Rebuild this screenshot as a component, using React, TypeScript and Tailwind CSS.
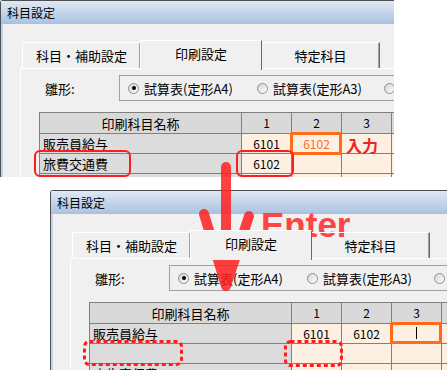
import React from "react";

type Row = { name: string; cells: string[]; orange?: number };

const topRows: Row[] = [
  { name: "販売員給与", cells: ["6101", "6102", "", "", ""], orange: 1 },
  { name: "旅費交通費", cells: ["6102", "", "", "", ""] },
  { name: "広告宣伝費", cells: ["6103", "", "", "", ""] },
];

const bottomRows: Row[] = [
  { name: "販売員給与", cells: ["6101", "6102", "", "", ""] },
  { name: "", cells: ["", "", "", "", ""] },
  { name: "広告宣伝費", cells: ["6103", "", "", "", ""] },
];

function Radio({ on }: { on?: boolean }) {
  return (
    <span className="w-[11px] h-[11px] shrink-0 rounded-full border border-[#8e8f8f] bg-gradient-to-br from-[#d4d4d4] to-white flex items-center justify-center">
      {on && <span className="w-[4px] h-[4px] rounded-full bg-black" />}
    </span>
  );
}

function SettingsWindow({ rows }: { rows: Row[] }) {
  return (
    <div className="w-[460px] h-[200px] flex flex-col border-t border-l border-[#4e4e4e] rounded-tl-[3px] bg-[#f0f0f0]">
      <div className="h-[23px] shrink-0 flex items-center pl-[6px] text-[12px] leading-none bg-gradient-to-b from-[#e0e9f5] to-[#a9c1df]">
        科目設定
      </div>

      <div className="flex-1 flex flex-col border-l-2 border-[#c3d5ec] pt-[16px] pl-[17px]">
        {/* tabs */}
        <div className="relative z-10 flex items-start h-[30px] pl-[2px] text-[13px] leading-none">
          <div className="shrink-0 mt-[2px] w-[118px] h-[26px] flex items-center justify-center border-t border-l border-white shadow-[inset_-1px_0_0_#a0a0a0]">
            科目・補助設定
          </div>
          <div className="shrink-0 w-[122px] h-[30px] pb-[4px] flex items-center justify-center bg-[#f0f0f0] border-t border-l border-white border-r border-r-[#6a6a6a]">
            印刷設定
          </div>
          <div className="shrink-0 mt-[2px] w-[118px] h-[26px] flex items-center justify-center border-t border-white border-r border-r-[#6a6a6a] shadow-[inset_-1px_0_0_#a0a0a0]">
            特定科目
          </div>
        </div>

        {/* panel */}
        <div className="-mt-[2px] flex-1 flex flex-col border-t border-l border-white pt-[6px]">
          <div className="flex items-center h-[26px] text-[13px] leading-none">
            <div className="shrink-0 w-[98px] pl-[24px]">雛形:</div>
            <div className="flex-1 h-[26px] flex items-center pl-[8px] border border-[#a0a0a0]">
              <div className="shrink-0 w-[129px] flex items-center gap-[5px]">
                <Radio on />
                <span>試算表(定形A4)</span>
              </div>
              <div className="shrink-0 w-[127px] flex items-center gap-[5px]">
                <Radio />
                <span>試算表(定形A3)</span>
              </div>
              <div className="shrink-0 flex items-center">
                <Radio />
              </div>
            </div>
          </div>

          <div className="mt-[11px] ml-[18px] w-max grid grid-cols-[201px_49px_49px_49px_49px_49px] grid-rows-[20px_19px_19px_19px] gap-px bg-[#808080] border border-[#808080] leading-none">
            <div className="bg-[#d9d9d9] flex items-center justify-center text-[13px]">印刷科目名称</div>
            {["1", "2", "3", "4", "5"].map((n) => (
              <div key={n} className="bg-[#d9d9d9] flex items-center justify-center text-[12px]">
                {n}
              </div>
            ))}
            {rows.map((r, i) => (
              <React.Fragment key={i}>
                <div className="bg-[#dcdcdc] flex items-center pl-[3px] text-[13px]">{r.name}</div>
                {r.cells.map((c, j) => (
                  <div
                    key={j}
                    className={`bg-[#fdf0e2] flex items-center justify-center text-[12px] ${r.orange === j ? "text-[#ff6a1f]" : ""}`}
                  >
                    {c}
                  </div>
                ))}
              </React.Fragment>
            ))}
          </div>
        </div>
      </div>
    </div>
  );
}

export default function App() {
  return (
    <div className="relative w-[447px] h-[370px] overflow-hidden bg-white text-black font-['Noto_Sans_CJK_JP',sans-serif]">
      <div className="absolute left-0 top-0 w-[394px] h-[177px] overflow-hidden">
        <SettingsWindow rows={topRows} />
      </div>
      <div className="absolute left-[50px] top-[190px] w-[397px] h-[180px] overflow-hidden">
        <SettingsWindow rows={bottomRows} />
      </div>

      {/* marks on the top shot */}
      <div className="absolute left-[290px] top-[132px] w-[52px] h-[23px] border-[3px] border-[#ff6b1a] rounded-[2px]" />
      <div className="absolute left-[346px] top-[137px] text-[16px] font-bold leading-none text-[#ef2424]">入力</div>
      <div className="absolute left-[34px] top-[150px] w-[97px] h-[27px] border-2 border-[#ff1c1c] rounded-[6px]" />
      <div className="absolute left-[236px] top-[150px] w-[58px] h-[27px] border-2 border-[#ff1c1c] rounded-[6px]" />

      {/* marks on the bottom shot */}
      <div className="absolute left-[390px] top-[322px] w-[52px] h-[22px] border-[3px] border-[#ff6b1a] rounded-[2px]" />
      <div className="absolute left-[416px] top-[327px] w-px h-[12px] bg-black" />
      <svg className="absolute inset-0 pointer-events-none" width="447" height="370">
        <g fill="none" stroke="#ff1c1c" strokeWidth="3" strokeDasharray="4 3">
          <rect x="84.5" y="341.5" width="97" height="23" rx="5" />
          <rect x="285.5" y="341.5" width="56" height="24" rx="5" />
        </g>
        <g opacity="0.85" stroke="#ff2020" strokeWidth="10" strokeLinecap="round" strokeLinejoin="round" fill="none">
          <line x1="226" y1="167" x2="226" y2="284" />
          <polyline points="204,214 226,286 249,216" />
        </g>
      </svg>

      <div className="absolute left-[261px] top-[207px] text-[35px] font-bold leading-none text-[#ff4444] font-['Liberation_Sans',Arial,sans-serif]">
        Enter
      </div>
    </div>
  );
}
